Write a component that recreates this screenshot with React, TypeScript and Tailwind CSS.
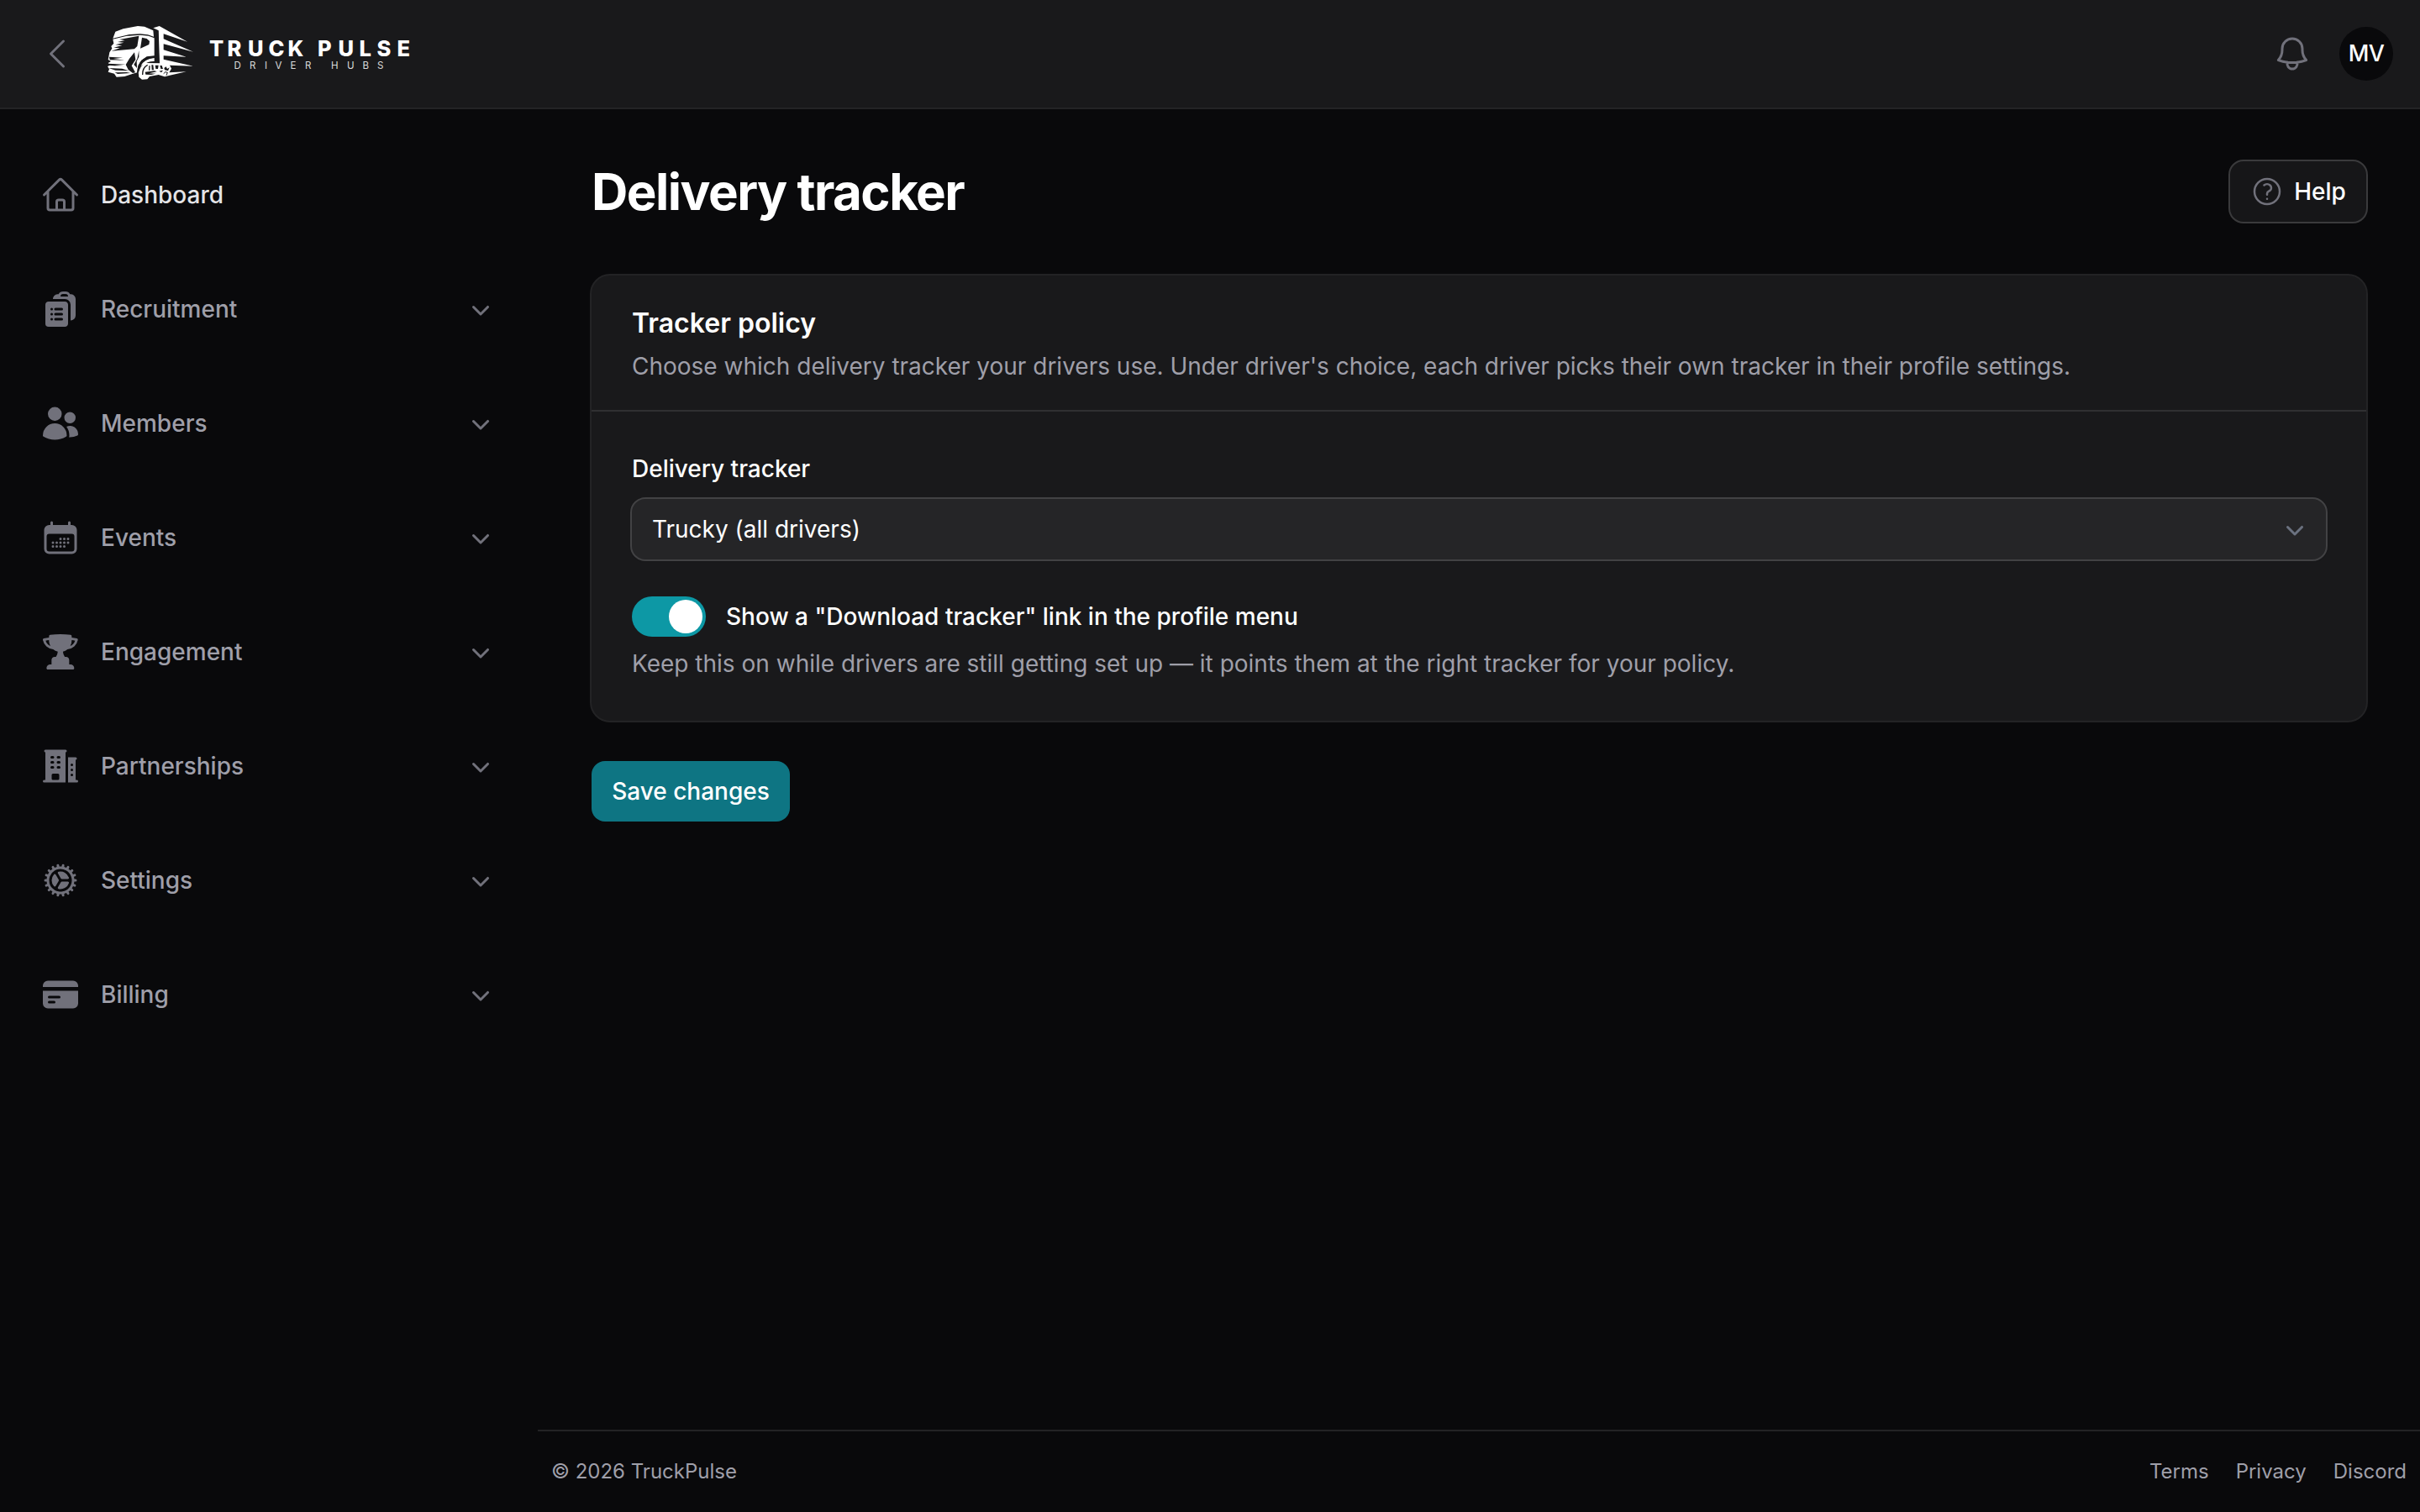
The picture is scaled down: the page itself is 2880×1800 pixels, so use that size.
import { useState } from "react";
import type { IconType } from "react-icons";
import {
  HiBuildingOffice2,
  HiCalendarDays,
  HiClipboardDocumentList,
  HiCog,
  HiCreditCard,
  HiMiniChevronDown,
  HiOutlineBell,
  HiOutlineChevronLeft,
  HiOutlineHome,
  HiOutlineQuestionMarkCircle,
  HiTrophy,
  HiUsers,
} from "react-icons/hi2";

interface NavItem {
  label: string;
  icon: IconType;
}

const navItems: NavItem[] = [
  { label: "Recruitment", icon: HiClipboardDocumentList },
  { label: "Members", icon: HiUsers },
  { label: "Events", icon: HiCalendarDays },
  { label: "Engagement", icon: HiTrophy },
  { label: "Partnerships", icon: HiBuildingOffice2 },
  { label: "Settings", icon: HiCog },
  { label: "Billing", icon: HiCreditCard },
];

const footerLinks = ["Terms", "Privacy", "Discord"];

function TruckLogo() {
  return (
    <svg viewBox="384 96 312 198" className="h-[66px] w-[104px] shrink-0">
      <g fill="#fff">
        {/* roof */}
        <path d="M412 116 L440 106 L492 96 L516 98 L547 112 L549 134 L528 127 L500 124 L462 126 L403 140 Z" />
        {/* cab body */}
        <path d="M403 143 L450 132 L500 128 L530 131 L551 139 L551 202 L524 205 L505 218 L494 236 L490 262 L470 268 L445 276 L416 278 L408 266 L386 260 L390 250 L384 240 L392 236 L386 228 L396 222 L386 216 L388 206 L391 190 L400 176 L397 168 L406 158 Z" />
        {/* fender */}
        <path d="M503 238 Q514 214 551 210 L551 222 Q528 221 514 234 Z" />
        {/* trailer */}
        <path d="M547 103 L569 96 L669 152 L584 124 L584 142 L690 188 L584 160 L584 181 L665 206 L584 202 L584 215 L690 239 L606 236 L612 248 L604 262 L665 259 L606 272 L588 277 L566 270 L534 276 L526 286 L507 287 L496 278 L494 260 L504 240 L518 228 L570 229 L566 112 Z" />
      </g>
      <g fill="#19191b">
        {/* windscreen and side window */}
        <path d="M426 144 L496 131 L490 168 L480 178 L398 185 L428 175 L406 173 L436 165 L412 163 L442 155 L420 153 L446 147 Z" />
        <path d="M507 137 L524 141 L534 150 L532 162 L501 176 Z" />
        {/* gap between cab and trailer */}
        <path d="M551 108 L565 113 L568 228 L554 227 Z" />
        {/* headlight */}
        <path d="M480 190 L462 212 L449 234 L458 252 L474 264 L483 262 L470 238 L484 216 Z" />
        <path d="M496 184 L490 212 L478 234 L489 246 L488 222 L496 206 Z" />
        {/* wheel arch */}
        <path d="M489 264 Q490 232 506 218 Q522 205 551 204 L551 209 Q526 211 511 224 Q499 236 495 262 Z" />
        {/* grille streaks */}
        <path d="M390 206 L438 209 L404 213 L446 218 L392 217 Z" />
        <path d="M386 230 L448 233 L410 237 L448 241 L386 236 Z" />
        <path d="M388 246 L436 248 L460 256 L412 254 Z" />
        <path d="M410 262 L452 261 L466 264 L420 267 Z" />
        {/* tank and axle */}
        <path d="M541 235 h6 l2 18 h-7 Z M554 236 h12 l-2 13 h-8 Z M571 237 h7 l4 12 h-8 Z" />
        <path d="M518 260 L552 256 L560 259 L532 265 L556 266 L540 270 L520 269 Z" />
        <path d="M586 246 l7 -5 l4 8 l8 -5 l-5 12 l-12 -3 Z M568 257 l14 -3 l-6 8 Z" />
      </g>
      <path fill="none" stroke="#19191b" strokeWidth="4" d="M527 235 Q508 245 509 270 M534 238 L533 254" />
      <path fill="none" stroke="#19191b" strokeWidth="3" d="M584 266 Q590 256 598 262 L594 272" />
    </svg>
  );
}

function Header() {
  return (
    <header className="flex h-[130px] shrink-0 items-center border-b-2 border-[#232325] bg-[#19191b] pl-11 pr-8">
      <HiOutlineChevronLeft className="size-12 text-zinc-500" />
      <div className="ml-9 flex items-center">
        <TruckLogo />
        <svg viewBox="0 -20 260 80" className="ml-4 h-20 w-[260px]" fill="#fff">
          <text
            x="1 22.5 47 71.5 94.5 118 130 154.5 179.5 200.5 224.5"
            y="22.7"
            fontFamily="Inter"
            fontSize="25.5"
            fontWeight="800"
          >
            TRUCK PULSE
          </text>
          <text
            x="30.5 49 67 79.5 97.5 115 130 146 165 183.5 201"
            y="37.7"
            fontFamily="Inter"
            fontSize="11.5"
            fillOpacity="0.85"
          >
            DRIVER HUBS
          </text>
        </svg>
      </div>
      <div className="ml-auto flex items-center gap-8">
        <HiOutlineBell className="size-12 text-zinc-500" />
        <div className="flex size-16 items-center justify-center rounded-full bg-zinc-950 pt-px text-[27px] font-medium tracking-[-0.02em] text-white">
          MV
        </div>
      </div>
    </header>
  );
}

function Sidebar() {
  return (
    <nav className="flex w-[640px] shrink-0 flex-col gap-16 px-12 pt-[66px] text-[28px] font-medium leading-[72px]">
      <div className="flex h-[72px] items-center gap-6 text-zinc-200">
        <HiOutlineHome className="size-12 text-zinc-500" />
        Dashboard
      </div>
      {navItems.map(({ label, icon: Icon }) => (
        <div key={label} className="flex h-[72px] items-center gap-6 text-zinc-400">
          <Icon className="size-12 text-zinc-500" />
          <span>{label}</span>
          <HiMiniChevronDown className="ml-auto size-10 text-zinc-500" />
        </div>
      ))}
    </nav>
  );
}

export default function App() {
  const [showLink, setShowLink] = useState(true);

  return (
    <div className="flex h-[1800px] w-[2880px] flex-col overflow-hidden bg-[#09090b] font-['Inter',sans-serif] text-[28px] text-white">
      <Header />
      <div className="flex min-h-0 flex-1">
        <Sidebar />
        <div className="flex min-w-0 flex-1 flex-col">
          <main className="flex-1 pl-16 pr-[62px] pt-[60px]">
            <div className="flex h-[76px] items-center justify-between">
              <h1 className="text-[60px] font-bold tracking-[-0.025em]">Delivery tracker</h1>
              <button className="flex h-[76px] w-[166px] items-center justify-center gap-3 rounded-[18px] border-2 border-[#3a3a3c] bg-[#161618] font-medium">
                <HiOutlineQuestionMarkCircle className="size-10 text-zinc-500" />
                Help
              </button>
            </div>

            <section className="-ml-0.5 mt-[60px] h-[534px] rounded-3xl border-2 border-[#232325] bg-[#19191b]">
              <div className="h-[162px] border-b-2 border-[#303032] px-12 pt-9">
                <h2 className="text-[32px] font-semibold leading-[42px]">Tracker policy</h2>
                <p className="mt-2 leading-[44px] text-zinc-400">
                  Choose which delivery tracker your drivers use. Under driver's choice, each driver picks their own
                  tracker in their profile settings.
                </p>
              </div>
              <div className="px-[46px] pt-12">
                <div className="ml-0.5 font-medium leading-10">Delivery tracker</div>
                <div className="mt-[14px] flex h-[76px] items-center justify-between rounded-[18px] border-2 border-[#424244] bg-[#252527] pl-6 pr-[17px] shadow-xs">
                  Trucky (all drivers)
                  <HiMiniChevronDown className="size-10 text-[#6b7280]" />
                </div>
                <div className="ml-0.5 mt-[42px] flex h-12 items-center gap-6">
                  <button
                    role="switch"
                    aria-checked={showLink}
                    onClick={() => setShowLink(!showLink)}
                    className="flex h-12 w-22 items-center justify-end rounded-full bg-[#0d98a5] pr-1"
                  >
                    <span className="size-10 rounded-full bg-white" />
                  </button>
                  <span className="font-medium">Show a "Download tracker" link in the profile menu</span>
                </div>
                <p className="ml-0.5 mt-3 leading-10 text-zinc-400">
                  Keep this on while drivers are still getting set up — it points them at the right tracker for your
                  policy.
                </p>
              </div>
            </section>

            <button className="mt-[46px] h-[72px] w-[236px] rounded-2xl bg-[#0e7583] font-medium">Save changes</button>
          </main>

          <footer className="flex h-[98px] shrink-0 items-center justify-between border-t-2 border-[#232325] px-4 text-2xl text-zinc-400">
            <span>© 2026 TruckPulse</span>
            <div className="flex gap-8">
              {footerLinks.map((link) => (
                <a key={link} href="#">
                  {link}
                </a>
              ))}
            </div>
          </footer>
        </div>
      </div>
    </div>
  );
}
